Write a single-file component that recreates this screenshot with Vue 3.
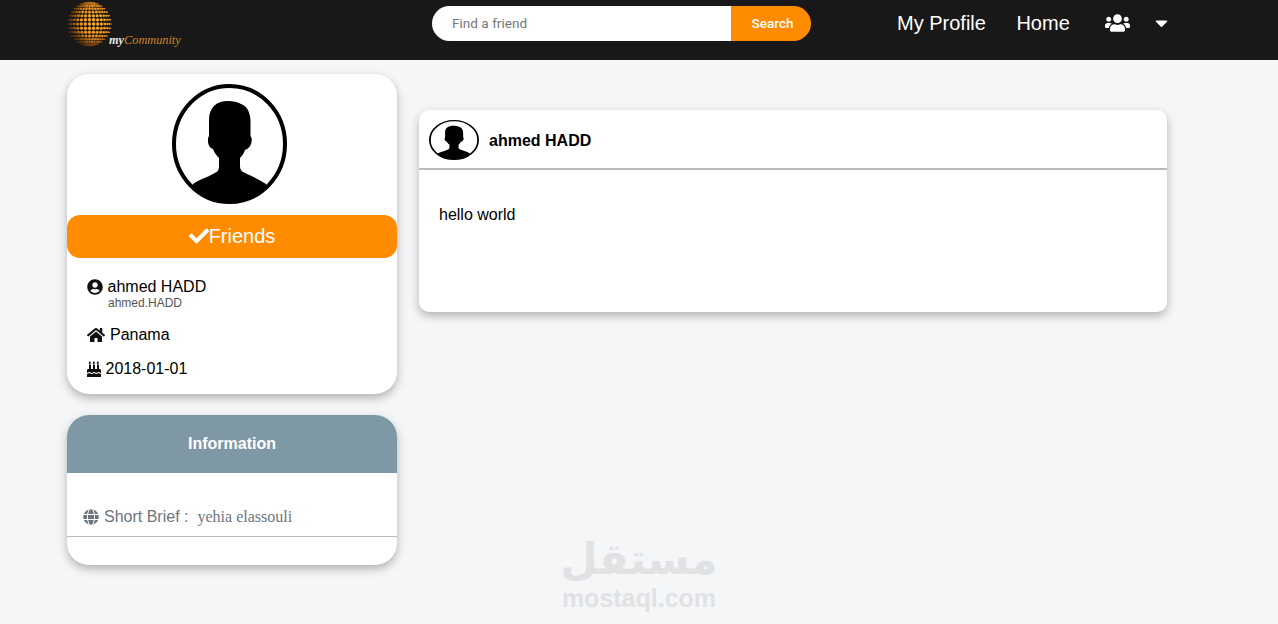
<template>
    <div class="page">
        <header class="top_bar">
            <a class="logo">
                <svg class="globe" width="46" height="50" viewBox="0 0 46 50">
                    <defs>
                        <radialGradient id="globe_fill" gradientUnits="userSpaceOnUse" cx="29" cy="21" r="27">
                            <stop offset="0" stop-color="#ffb42c" />
                            <stop offset="0.6" stop-color="#f09018" />
                            <stop offset="1" stop-color="#5a3008" />
                        </radialGradient>
                    </defs>
                    <circle
                    v-for="dot in globe_dots"
                    :key="dot.key"
                    :cx="dot.x"
                    :cy="dot.y"
                    :r="dot.r"
                    fill="url(#globe_fill)"
                    />
                </svg>
                <span class="logo_text"><b>my</b><i>Community</i></span>
            </a>
            <div class="search">
                <input type="text" placeholder="Find a friend" />
                <button>Search</button>
            </div>
            <nav class="links">
                <a class="profile_link">My Profile</a>
                <a class="home_link">Home</a>
                <svg class="users_icon" viewBox="0 0 640 512"><path :d="icons.users" /></svg>
                <svg class="caret_icon" viewBox="0 0 320 512"><path :d="icons.caret" /></svg>
            </nav>
        </header>

        <div class="content">
            <aside class="side">
                <section class="card profile_card">
                    <svg class="avatar avatar_big" viewBox="0 0 115 120" preserveAspectRatio="none">
                        <defs>
                            <clipPath id="avatar_clip"><ellipse cx="57.5" cy="60" rx="55.5" ry="58" /></clipPath>
                        </defs>
                        <ellipse cx="57.5" cy="60" rx="55.5" ry="58" fill="#fff" stroke="#000" />
                        <path :d="silhouette" clip-path="url(#avatar_clip)" />
                    </svg>
                    <button class="friends_btn">
                        <svg viewBox="0 0 512 512"><path :d="icons.check" /></svg>Friends
                    </button>
                    <div class="facts">
                        <div class="fact name_fact">
                            <div>
                                <svg class="fact_icon" viewBox="0 0 496 512"><path :d="icons.user" /></svg>
                                <span>ahmed HADD</span>
                            </div>
                            <small>ahmed.HADD</small>
                        </div>
                        <div class="fact">
                            <svg class="fact_icon home_icon" viewBox="0 0 576 512"><path :d="icons.home" /></svg>
                            <span>Panama</span>
                        </div>
                        <div class="fact">
                            <svg class="fact_icon cake_icon" viewBox="0 0 448 512"><path :d="icons.cake" /></svg>
                            <span>2018-01-01</span>
                        </div>
                    </div>
                </section>

                <section class="card info_card">
                    <h3>Information</h3>
                    <div class="brief">
                        <svg viewBox="0 0 496 512"><path :d="icons.globe" /></svg>
                        <span>Short Brief :</span>
                        <em>yehia elassouli</em>
                    </div>
                </section>
            </aside>

            <main class="feed">
                <article class="card post">
                    <div class="post_head">
                        <svg class="avatar avatar_small" viewBox="0 0 115 120" preserveAspectRatio="none">
                            <ellipse cx="57.5" cy="60" rx="55.5" ry="58" fill="#fff" stroke="#000" />
                            <path :d="silhouette" clip-path="url(#avatar_clip)" />
                        </svg>
                        <strong>ahmed HADD</strong>
                    </div>
                    <p>hello world</p>
                </article>
            </main>
        </div>

        <div class="watermark">
            <span class="wm_ar" dir="rtl">مستقل</span>
            <span class="wm_en">mostaql.com</span>
        </div>
    </div>
</template>

<script setup>
const silhouette = 'M21 100 C28 95 36 93 41 90 C45 88 47 87 47 82 L47 74 C44 71 42 68 41 65 C38 64 36 61 36 57 C36 55 36 53 37 52 L37 36 C37 24 44 17 56 17 C61 17 66 18 69 20 C75 22 78 28 78.5 36 L78.5 52 C80 54 80 56 79.5 58 C79 62 76 65 73 66 C72 69 70 72 68 74 L68 82 C68 87 71 88 75 90 C82 93 88 96 94 100 L100 120 L15 120 Z'

const icons = {
    check: 'M173.898 439.404l-166.4-166.4c-9.997-9.997-9.997-26.206 0-36.204l36.203-36.204c9.997-9.998 26.207-9.998 36.204 0L192 312.69 432.095 72.596c9.997-9.997 26.207-9.997 36.204 0l36.203 36.204c9.997 9.997 9.997 26.206 0 36.204l-294.4 294.401c-9.998 9.997-26.207 9.997-36.204-.001z',
    users: 'M96 224c35.3 0 64-28.7 64-64s-28.7-64-64-64-64 28.7-64 64 28.7 64 64 64zm448 0c35.3 0 64-28.7 64-64s-28.7-64-64-64-64 28.7-64 64 28.7 64 64 64zm32 32h-64c-17.6 0-33.5 7.1-45.1 18.6 40.3 22.1 68.9 62 75.1 109.4h66c17.7 0 32-14.3 32-32v-32c0-35.3-28.7-64-64-64zm-256 0c61.9 0 112-50.1 112-112S381.9 32 320 32 208 82.1 208 144s50.1 112 112 112zm76.8 32h-8.3c-20.8 10-43.9 16-68.5 16s-47.6-6-68.5-16h-8.3C179.6 288 128 339.6 128 403.2V432c0 26.5 21.5 48 48 48h288c26.5 0 48-21.5 48-48v-28.8c0-63.6-51.6-115.2-115.2-115.2zm-223.7-13.4C161.5 263.1 145.6 256 128 256H64c-35.3 0-64 28.7-64 64v32c0 17.7 14.3 32 32 32h65.9c6.3-47.4 34.9-87.3 75.2-109.4z',
    caret: 'M31.3 192h257.3c17.8 0 26.7 21.5 14.1 34.1L174.1 354.8c-7.8 7.8-20.5 7.8-28.3 0L17.2 226.1C4.6 213.5 13.5 192 31.3 192z',
    user: 'M248 8C111 8 0 119 0 256s111 248 248 248 248-111 248-248S385 8 248 8zm0 96c48.6 0 88 39.4 88 88s-39.4 88-88 88-88-39.4-88-88 39.4-88 88-88zm0 344c-58.7 0-111.3-26.6-146.5-68.2 18.8-35.4 55.6-59.8 98.5-59.8 2.4 0 4.8.4 7.1 1.1 13 4.2 26.6 6.9 40.9 6.9 14.3 0 28-2.7 40.9-6.9 2.3-.7 4.7-1.1 7.1-1.1 42.9 0 79.7 24.4 98.5 59.8C359.3 421.4 306.7 448 248 448z',
    home: 'M280.37 148.26L96 300.11V464a16 16 0 0 0 16 16l112.06-.29a16 16 0 0 0 15.92-16V368a16 16 0 0 1 16-16h64a16 16 0 0 1 16 16v95.64a16 16 0 0 0 16 16.05L464 480a16 16 0 0 0 16-16V300L295.67 148.26a12.19 12.19 0 0 0-15.3 0zM571.6 251.47L488 182.56V44.05a12 12 0 0 0-12-12h-56a12 12 0 0 0-12 12v72.61L318.47 43a48 48 0 0 0-61 0L4.34 251.47a12 12 0 0 0-1.6 16.9l25.5 31A12 12 0 0 0 45.15 301l235.22-193.74a12.19 12.19 0 0 1 15.3 0L530.9 301a12 12 0 0 0 16.9-1.6l25.5-31a12 12 0 0 0-1.7-16.93z',
    cake: 'M448 384c-28.02 0-31.26-32-74.5-32-43.43 0-46.825 32-74.75 32-27.695 0-31.454-32-74.75-32-42.842 0-47.218 32-74.5 32-28.148 0-31.202-32-74.75-32-43.547 0-46.653 32-74.75 32v-80c0-26.5 21.5-48 48-48h16V112h64v144h64V112h64v144h64V112h64v144h16c26.5 0 48 21.5 48 48v80zm0 128H0v-96c43.356 0 46.767-32 74.75-32 27.951 0 31.253 32 74.75 32 42.843 0 47.217-32 74.5-32 28.148 0 31.201 32 74.75 32 43.357 0 46.767-32 74.75-32 27.488 0 31.252 32 74.5 32v96zM88 96c-17.75 0-32-14.25-32-32 0-31 32-23 32-64 12 0 32 29.5 32 56s-14.25 40-32 40zm128 0c-17.75 0-32-14.25-32-32 0-31 32-23 32-64 12 0 32 29.5 32 56s-14.25 40-32 40zm128 0c-17.75 0-32-14.25-32-32 0-31 32-23 32-64 12 0 32 29.5 32 56s-14.25 40-32 40z',
    globe: 'M336.5 160C322 70.7 287.8 8 248 8s-74 62.7-88.5 152h177zM152 256c0 22.2 1.2 43.5 3.3 64h185.3c2.1-20.5 3.3-41.8 3.3-64s-1.2-43.5-3.3-64H155.3c-2.1 20.5-3.3 41.8-3.3 64zm324.7-96c-28.6-67.9-86.5-120.4-158-141.6 24.4 33.8 41.2 84.7 50 141.6h108zM177.2 18.4C105.8 39.6 47.8 92.1 19.3 160h108c8.7-56.9 25.5-107.8 49.9-141.6zM487.4 192H372.7c2.1 21 3.3 42.5 3.3 64s-1.2 43-3.3 64h114.6c5.5-20.5 8.6-41.8 8.6-64s-3.1-43.5-8.5-64zM120 256c0-21.5 1.2-43 3.3-64H8.6C3.2 212.5 0 233.8 0 256s3.2 43.5 8.6 64h114.6c-2-21-3.2-42.5-3.2-64zm39.5 96c14.5 89.3 48.7 152 88.5 152s74-62.7 88.5-152h-177zm159.3 141.6c71.4-21.2 129.4-73.7 158-141.6h-108c-8.8 56.9-25.6 107.8-50 141.6zM19.3 352c28.6 67.9 86.5 120.4 158 141.6-24.4-33.8-41.2-84.7-50-141.6h-108z'
}

// dotted sphere for the logo, rows and columns bunch up towards the rim
const globe_dots = []
const globe_r = 22
for (let lat = -77; lat <= 77; lat += 11) {
    for (let lon = -77; lon <= 77; lon += 11) {
        const lat_rad = lat * Math.PI / 180
        const lon_rad = lon * Math.PI / 180
        const depth = Math.cos(lat_rad) * Math.cos(lon_rad)
        globe_dots.push({
            key: `${lat}_${lon}`,
            x: 22.5 + globe_r * Math.cos(lat_rad) * Math.sin(lon_rad),
            y: 24 + globe_r * Math.sin(lat_rad),
            r: 0.4 + 1.35 * depth
        })
    }
}
</script>

<style>
html, body {
    margin: 0;
    background: #f5f6f8;
}
</style>

<style scoped>
.page {
    position: relative;
    height: 624px;
    overflow: hidden;
    background: #f5f6f8;
    font-family: "Liberation Sans", Arial, sans-serif;
    color: #000;
}
.top_bar {
    display: flex;
    align-items: flex-start;
    height: 60px;
    background: #181818;
}
.logo {
    display: flex;
    align-items: flex-end;
    width: 365px;
    height: 50px;
    margin-left: 67px;
}
.globe {
    flex: none;
}
.logo_text {
    margin-left: -4px;
    margin-bottom: 3px;
    font-family: "Liberation Serif", serif;
    font-style: italic;
    font-size: 12.3px;
    line-height: 14px;
}
.logo_text b {
    color: #e8e8e8;
}
.logo_text i {
    color: #d08420;
}
.search {
    display: flex;
    width: 379px;
    height: 35px;
    margin-top: 6px;
    border-radius: 18px;
    overflow: hidden;
}
.search input {
    flex: 1;
    min-width: 0;
    padding: 0 0 2px 20px;
    border: none;
    outline: none;
    background: #fff;
    font-family: Roboto, sans-serif;
    font-size: 13.6px;
}
.search input::placeholder {
    color: #777;
    opacity: 1;
}
.search button {
    width: 80px;
    padding: 0 0 2px 3px;
    border: none;
    background: #ff8c00;
    color: #fff;
    font-family: Roboto, sans-serif;
    font-weight: 500;
    font-size: 13.5px;
}
.links {
    display: flex;
    align-items: center;
    height: 46px;
    margin-left: 86px;
    color: #fff;
    font-size: 20px;
}
.home_link {
    margin-left: 30.5px;
}
.users_icon {
    width: 25px;
    height: 20px;
    margin-left: 35.5px;
    fill: #fff;
}
.caret_icon {
    width: 13px;
    height: 20px;
    margin-left: 25px;
    fill: #fff;
}
.content {
    display: flex;
    align-items: flex-start;
    gap: 22px;
    padding: 14px 0 0 67px;
}
.side {
    display: flex;
    flex-direction: column;
    gap: 21px;
    width: 330px;
}
.card {
    background: #fff;
    box-shadow: 0 4px 10px rgba(0, 0, 0, 0.28);
}
.profile_card {
    display: flex;
    flex-direction: column;
    align-items: center;
    height: 320px;
    padding-top: 10px;
    box-sizing: border-box;
    border-radius: 22px;
}
.avatar {
    display: block;
    flex: none;
}
.avatar_big {
    width: 115px;
    height: 120px;
    margin-right: 5px;
}
.avatar_big ellipse {
    stroke-width: 4;
}
.avatar_small {
    width: 50px;
    height: 40px;
}
.avatar_small ellipse {
    stroke-width: 4;
}
.friends_btn {
    display: flex;
    align-items: center;
    justify-content: center;
    width: 100%;
    height: 43px;
    margin-top: 11px;
    padding: 0;
    border: none;
    border-radius: 13px;
    background: #ff8c00;
    color: #fff;
    font-family: inherit;
    font-size: 20px;
}
.friends_btn svg {
    width: 20px;
    height: 20px;
    margin-top: -2px;
    fill: #fff;
}
.facts {
    align-self: stretch;
    padding: 20px 20px 0;
    font-size: 16px;
}
.fact {
    display: flex;
    align-items: center;
    height: 18px;
    margin-bottom: 16px;
}
.name_fact {
    display: block;
    height: auto;
    line-height: 18px;
}
.name_fact > div {
    display: flex;
    align-items: center;
}
.name_fact small {
    display: block;
    margin: 0 0 0 21px;
    color: #555;
    font-size: 12px;
    line-height: 14px;
}
.fact_icon {
    flex: none;
    width: 16px;
    height: 16px;
    margin-right: 4.5px;
    fill: #111;
}
.home_icon {
    width: 18px;
    margin-right: 5px;
}
.cake_icon {
    width: 14px;
    margin-right: 4.5px;
}
.info_card {
    height: 150px;
    border-radius: 22px;
    overflow: hidden;
}
.info_card h3 {
    height: 58px;
    margin: 0;
    background: #7f98a6;
    color: #fff;
    font-size: 16px;
    line-height: 58px;
    text-align: center;
}
.brief {
    display: flex;
    align-items: center;
    height: 64px;
    padding: 25px 0 0 16px;
    box-sizing: border-box;
    border-bottom: 1px solid #bbb;
    color: #6c757d;
    font-size: 16px;
}
.brief svg {
    width: 16px;
    height: 16px;
    margin-right: 5px;
    fill: #6c757d;
}
.brief em {
    margin-left: 9px;
    font-family: "Liberation Serif", serif;
    font-style: normal;
    font-size: 16px;
}
.feed {
    width: 748px;
    padding-top: 36px;
}
.post {
    height: 202px;
    border-radius: 10px;
    overflow: hidden;
}
.post_head {
    display: flex;
    align-items: center;
    gap: 10px;
    height: 56px;
    padding: 2px 0 0 10px;
    border-bottom: 2px solid #bbb;
    font-size: 16px;
}
.post_head strong {
    padding-top: 2px;
}
.post p {
    margin: 0;
    padding: 36px 20px 0;
    font-size: 16px;
    line-height: 18px;
}
.watermark {
    position: absolute;
    left: 540px;
    top: 533px;
    width: 198px;
    display: flex;
    flex-direction: column;
    align-items: center;
    color: #e0e2e4;
    font-weight: bold;
    pointer-events: none;
}
.wm_ar {
    font-family: "DejaVu Sans", sans-serif;
    font-size: 43px;
    line-height: 52px;
}
.wm_en {
    margin-top: -1px;
    font-size: 25px;
    line-height: 28px;
}
</style>
